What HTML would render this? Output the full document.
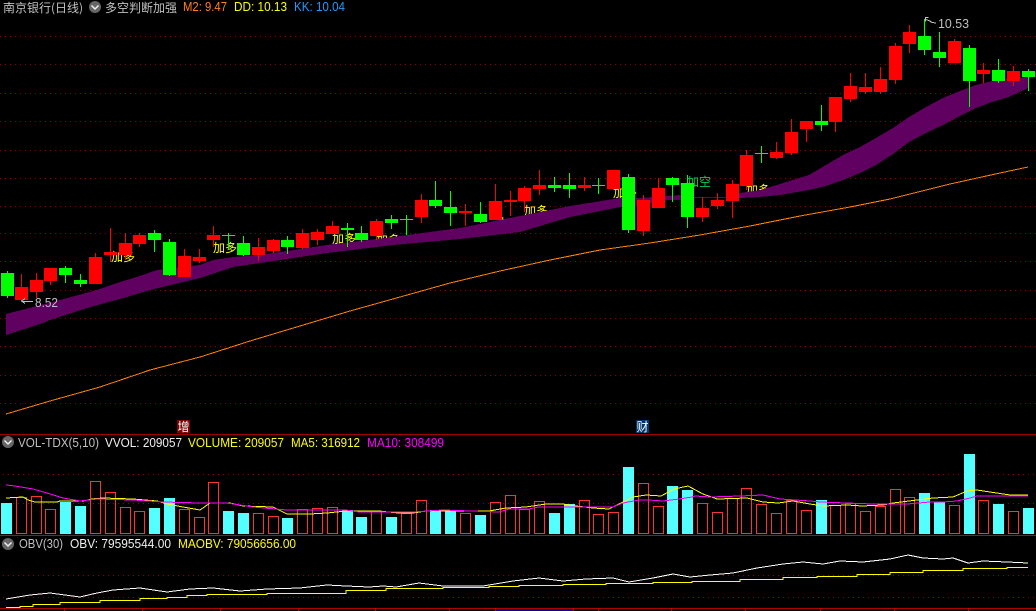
<!DOCTYPE html>
<html><head><meta charset="utf-8"><style>
html,body{margin:0;padding:0;background:#000;width:1036px;height:611px;overflow:hidden}
svg{display:block}
text{font-family:"Liberation Sans","WenQuanYi Zen Hei","Noto Sans CJK SC",sans-serif;font-size:13px}
.c{font-family:"WenQuanYi Zen Hei","Noto Sans CJK SC",sans-serif;font-size:12px}
path,polyline,polygon{shape-rendering:crispEdges}
circle,.s{shape-rendering:auto}
</style></head><body>
<svg width="1036" height="611" viewBox="0 0 1036 611" xmlns="http://www.w3.org/2000/svg">
<rect width="1036" height="611" fill="#000"/>
<path d="M0 36.5H1036M0 64.5H1036M0 93.5H1036M0 121.5H1036M0 150.5H1036M0 178.5H1036M0 206.5H1036M0 233.5H1036M0 261.5H1036M0 290.5H1036M0 318.5H1036M0 346.5H1036M0 375.5H1036M0 403.5H1036M3 474.5H1036M3 503.5H1036M3 575.5H1036M3 597.5H1036" stroke="#8c0000" stroke-width="1" stroke-dasharray="1 4" fill="none"/>

<g fill="#ffff00">
<text class="c" x="111" y="261">加多</text>
<text class="c" x="213" y="252">加多</text>
<text class="c" x="332" y="243">加多</text>
<text class="c" x="376" y="244">加多</text>
<text class="c" x="500" y="227">加多</text>
<text class="c" x="524" y="215">加多</text>
<text class="c" x="613" y="197">加多</text>
<text class="c" x="746" y="194">加多</text>
</g>
<text class="c" x="687" y="186" fill="#00d050">加空</text>

<polygon fill="#600060" points="6,314 60,300 97,290 117,283 140,276 157,270 200,265 213,260 233,257 260,255 327,245 393,237 460,228 520,216 570,206 620,198 640,198 665,196 680,195 695,197 725,197 740,193 760,190 780,184 809,175 826,165 843,155 860,147 876,138 893,128 909,117 926,107 943,98 960,91 976,85 992,81 1009,78 1028,77 1028,88 1009,97 992,102 976,108 960,116 943,125 926,133 909,142 893,154 876,165 860,173 843,180 826,186 809,190 780,195 760,197 740,198 725,198 695,198 680,200 665,200 640,205 620,207 570,217 520,232 460,239 393,245 327,253 260,263 233,267 200,278 150,290 127,297 87,308 50,320 43,323 6,335"/>

<polyline fill="none" stroke="#ff8000" stroke-width="1" points="6,414 50,401 100,387 150,370 200,357 250,341 300,326 350,311 400,297 450,283 500,271 550,260 600,250 650,243 700,235 750,226 800,216 850,207 890,199 950,184 1000,173 1028,167"/>

<path stroke="#ff0000" stroke-width="1" fill="none" d="M21.5 274V300M36.5 273V298M50.5 268V285M95.5 253V284M110.5 228V262M125.5 233V260M139.5 233V247M184.5 249V277M199.5 249V263M213.5 226V247M258.5 238V261M273.5 239V253M302.5 229V249M317.5 229V245M332.5 221V234M376.5 219V240M421.5 194V223M465.5 204V226M495.5 184V220M510.5 191V216M524.5 186V212M539.5 170V195M584.5 177V191M643.5 195V236M658.5 178V208M702.5 197V222M717.5 193V209M732.5 180V218M746.5 150V190M776.5 142V159M791.5 119V155M806.5 121V142M835.5 97V132M850.5 73V102M865.5 73V94M880.5 67V94M895.5 43V84M909.5 25V53M954.5 39V63M983.5 63V83M1013.5 66V86"/>
<path fill="#ff0000" d="M15 287h13v13h-13zM30 280h13v12h-13zM44 268h13v13h-13zM89 257h13v27h-13zM104 252h13v3h-13zM119 243h13v12h-13zM133 235h13v9h-13zM178 256h13v21h-13zM193 257h13v4h-13zM207 235h13v5h-13zM252 247h13v8h-13zM267 240h13v11h-13zM296 233h13v15h-13zM311 232h13v8h-13zM326 226h13v8h-13zM370 221h13v15h-13zM415 200h13v17h-13zM459 211h13v2h-13zM489 201h13v19h-13zM504 200h13v2h-13zM518 188h13v13h-13zM533 185h13v4h-13zM578 185h13v3h-13zM607 170h13v19h-13zM637 200h13v31h-13zM652 188h13v20h-13zM696 208h13v9h-13zM711 200h13v6h-13zM726 184h13v17h-13zM740 155h13v31h-13zM770 152h13v6h-13zM785 132h13v21h-13zM800 121h13v8h-13zM829 97h13v25h-13zM844 86h13v13h-13zM859 87h13v5h-13zM874 79h13v13h-13zM889 46h13v34h-13zM903 32h13v12h-13zM948 41h13v22h-13zM977 70h13v4h-13zM1007 71h13v10h-13z"/>
<path stroke="#00ff00" stroke-width="1" fill="none" d="M7.5 271V298M65.5 266V283M80.5 274V287M154.5 230V252M169.5 239V276M228.5 233V250M243.5 236V256M287.5 236V254M347.5 223V247M361.5 226V242M391.5 215V229M406.5 215V235M435.5 181V208M450.5 191V226M480.5 202V223M554.5 177V192M569.5 173V198M598.5 178V194M628.5 174V233M672.5 177V202M687.5 175V228M761.5 146V163M821.5 105V131M924.5 19V55M939.5 32V67M969.5 45V107M998.5 59V83M1028.5 69V91"/>
<path fill="#00ff00" d="M1 273h13v23h-13zM59 268h13v7h-13zM74 280h13v4h-13zM148 233h13v7h-13zM163 242h13v33h-13zM222 235h13v1h-13zM237 243h13v12h-13zM281 240h13v7h-13zM341 228h13v2h-13zM355 233h13v7h-13zM385 219h13v4h-13zM400 219h13v1h-13zM429 200h13v6h-13zM444 207h13v6h-13zM474 214h13v8h-13zM548 185h13v3h-13zM563 185h13v4h-13zM592 185h13v1h-13zM622 177h13v53h-13zM666 178h13v7h-13zM681 183h13v34h-13zM755 153h13v1h-13zM815 121h13v4h-13zM918 36h13v14h-13zM933 52h13v6h-13zM963 48h13v33h-13zM992 70h13v11h-13zM1022 71h13v6h-13z"/>

<!-- price labels -->
<path d="M25 298.5L21.5 301L25 303.5M21.5 301.5H33" stroke="#c0c0c0" fill="none"/>
<text x="35" y="307" fill="#c0c0c0" textLength="23" lengthAdjust="spacingAndGlyphs">8.52</text>
<path d="M928.5 17.5H925.5V21.5M925.5 19.5L929 20.5L932 22.5L936 23" stroke="#c0c0c0" fill="none"/>
<text x="938" y="28" fill="#c0c0c0" textLength="31" lengthAdjust="spacingAndGlyphs">10.53</text>

<!-- header -->
<text class="c" x="3" y="12" fill="#c0c0c0">南京银行(日线)</text>
<circle cx="95" cy="7" r="6" fill="#666"/><path class="s" d="M91.5 5.5L95 9L98.5 5.5" stroke="#eee" stroke-width="1.5" fill="none"/>
<text class="c" x="105" y="12" fill="#c0c0c0">多空判断加强</text>
<text x="183" y="11" fill="#ff8020" textLength="44" lengthAdjust="spacingAndGlyphs">M2: 9.47</text>
<text x="234" y="11" fill="#ffff00" textLength="53" lengthAdjust="spacingAndGlyphs">DD: 10.13</text>
<text x="294" y="11" fill="#1e9bff" textLength="51" lengthAdjust="spacingAndGlyphs">KK: 10.04</text>

<!-- signal tags -->
<rect x="177" y="420" width="13" height="13" fill="#800000"/><text class="c" x="177.5" y="431" fill="#fff">增</text>
<rect x="636" y="420" width="13" height="13" fill="#00376f"/><text class="c" x="636.5" y="431" fill="#fff">财</text>

<!-- separators -->
<rect x="0" y="434" width="1036" height="1" fill="#a00000"/>
<rect x="0" y="535" width="1036" height="1" fill="#c80000"/>
<rect x="0" y="608" width="1036" height="1" fill="#b00000"/>
<rect x="496" y="609" width="77" height="2" fill="#0000a0"/>
<path d="M64.5 608V611M142.5 608V611M220.5 608V611M298.5 608V611M375.5 608V611M449.5 608V611M495.5 608V611M573.5 608V611M598.5 608V611M671.5 608V611M745.5 608V611M820.5 608V611M894.5 608V611M968.5 608V611" stroke="#b00000"/>

<!-- VOL header -->
<circle cx="8" cy="442" r="6" fill="#666"/><path class="s" d="M4.5 440.5L8 444L11.5 440.5" stroke="#eee" stroke-width="1.5" fill="none"/>
<text x="18" y="447" fill="#c0c0c0" textLength="81" lengthAdjust="spacingAndGlyphs">VOL-TDX(5,10)</text>
<text x="105" y="447" fill="#f0f0f0" textLength="77" lengthAdjust="spacingAndGlyphs">VVOL: 209057</text>
<text x="188" y="447" fill="#ffff00" textLength="96" lengthAdjust="spacingAndGlyphs">VOLUME: 209057</text>
<text x="291" y="447" fill="#ffff00" textLength="69" lengthAdjust="spacingAndGlyphs">MA5: 316912</text>
<text x="367" y="447" fill="#ff00ff" textLength="77" lengthAdjust="spacingAndGlyphs">MA10: 308499</text>

<!-- volume bars -->
<path fill="#54ffff" d="M1 503h11V534H1zM60 502h11V534H60zM75 506h11V534H75zM149 508h11V534H149zM164 498h11V534H164zM223 511h11V534H223zM238 513h11V534H238zM282 518h11V534H282zM342 510h11V534H342zM356 517h11V534H356zM386 517h11V534H386zM430 510h11V534H430zM445 510h11V534H445zM475 515h11V534H475zM549 513h11V534H549zM564 504h11V534H564zM623 467h11V534H623zM667 486h11V534H667zM682 490h11V534H682zM816 500h11V534H816zM919 493h11V534H919zM934 502h11V534H934zM964 454h11V534H964zM993 504h11V534H993zM1023 508h11V534H1023z"/>
<path fill="none" stroke="#ff3232" stroke-width="1" d="M16.5 497.5h10V533.5h-10zM31.5 496.5h10V533.5h-10zM45.5 509.5h10V533.5h-10zM90.5 481.5h10V533.5h-10zM105.5 492.5h10V533.5h-10zM120.5 507.5h10V533.5h-10zM134.5 511.5h10V533.5h-10zM179.5 509.5h10V533.5h-10zM194.5 517.5h10V533.5h-10zM208.5 482.5h10V533.5h-10zM253.5 513.5h10V533.5h-10zM268.5 516.5h10V533.5h-10zM297.5 509.5h10V533.5h-10zM312.5 508.5h10V533.5h-10zM327.5 507.5h10V533.5h-10zM371.5 511.5h10V533.5h-10zM401.5 513.5h10V533.5h-10zM416.5 500.5h10V533.5h-10zM460.5 513.5h10V533.5h-10zM490.5 502.5h10V533.5h-10zM505.5 495.5h10V533.5h-10zM519.5 509.5h10V533.5h-10zM534.5 501.5h10V533.5h-10zM579.5 500.5h10V533.5h-10zM593.5 514.5h10V533.5h-10zM608.5 512.5h10V533.5h-10zM638.5 483.5h10V533.5h-10zM653.5 506.5h10V533.5h-10zM697.5 503.5h10V533.5h-10zM712.5 512.5h10V533.5h-10zM727.5 498.5h10V533.5h-10zM741.5 488.5h10V533.5h-10zM756.5 504.5h10V533.5h-10zM771.5 513.5h10V533.5h-10zM786.5 500.5h10V533.5h-10zM801.5 510.5h10V533.5h-10zM830.5 505.5h10V533.5h-10zM845.5 503.5h10V533.5h-10zM860.5 511.5h10V533.5h-10zM875.5 506.5h10V533.5h-10zM890.5 489.5h10V533.5h-10zM904.5 497.5h10V533.5h-10zM949.5 505.5h10V533.5h-10zM978.5 500.5h10V533.5h-10zM1008.5 511.5h10V533.5h-10z"/>

<polyline fill="none" stroke="#ffff00" stroke-width="1" points="6,498 23,497 28,500 35,502 57,502 60,501 83,501 92,499 103,498 133,499 157,501 167,504 183,507 200,510 210,503 230,503 243,506 273,507 287,514 310,514 327,513 346,511 379,511 388,512 399,513 413,513 426,511 489,511 506,508 526,507 546,504 563,504 576,506 593,508 609,509 623,502 633,497 646,495 661,496 674,489 688,486 703,494 717,499 747,498 763,502 778,503 793,501 810,504 823,506 847,505 862,506 883,505 893,503 917,500 933,498 953,497 967,491 977,490 990,492 1010,495 1028,495"/>
<polyline fill="none" stroke="#ff00ff" stroke-width="1" points="6,485 15,486 33,489 47,493 63,498 80,501 97,499 133,500 163,502 200,503 227,503 253,507 287,510 310,510 346,510 359,512 413,512 443,510 499,512 509,509 529,509 538,507 576,507 613,507 623,503 639,500 649,500 663,501 679,499 692,497 695,496 710,497 740,496 763,495 780,499 810,501 820,502 873,504 907,504 930,502 943,502 957,501 970,498 977,496 1028,496"/>

<!-- OBV header -->
<circle cx="8" cy="544" r="6" fill="#666"/><path class="s" d="M4.5 542.5L8 546L11.5 542.5" stroke="#eee" stroke-width="1.5" fill="none"/>
<text x="19" y="548" fill="#c0c0c0" textLength="44" lengthAdjust="spacingAndGlyphs">OBV(30)</text>
<text x="70" y="548" fill="#f0f0f0" textLength="101" lengthAdjust="spacingAndGlyphs">OBV: 79595544.00</text>
<text x="178" y="548" fill="#ffff00" textLength="118" lengthAdjust="spacingAndGlyphs">MAOBV: 79056656.00</text>

<polyline fill="none" stroke="#ffffff" stroke-width="1" points="6,599 30,595 50,593 80,597 97,593 113,590 140,588 167,592 190,589 213,588 240,591 267,589 300,588 327,585 346,586 369,587 383,586 396,587 419,583 443,586 483,586 513,581 539,578 563,581 586,579 613,578 629,582 653,578 673,574 690,577 710,575 733,573 757,568 783,564 803,562 823,564 840,561 863,562 890,559 908,555 923,558 943,559 953,558 968,563 983,561 1007,562 1028,563"/>
<path fill="none" stroke="#ffff00" stroke-width="1" d="M6 607.5H20V606.5H33V604.5H60V602.5H100V600.5H140V598.5H167V597.5H187V595.5H207V594.5H267V593.5H346V590.5H386V588.5H443V587.5H489V586.5H519V585.5H563V584.5H606V583.5H653V582.5H692V581.5H740V579.5H783V577.5H817V576.5H857V574.5H890V572.5H923V570.5H963V568.5H1007V567.5H1028"/>
</svg>
</body></html>
